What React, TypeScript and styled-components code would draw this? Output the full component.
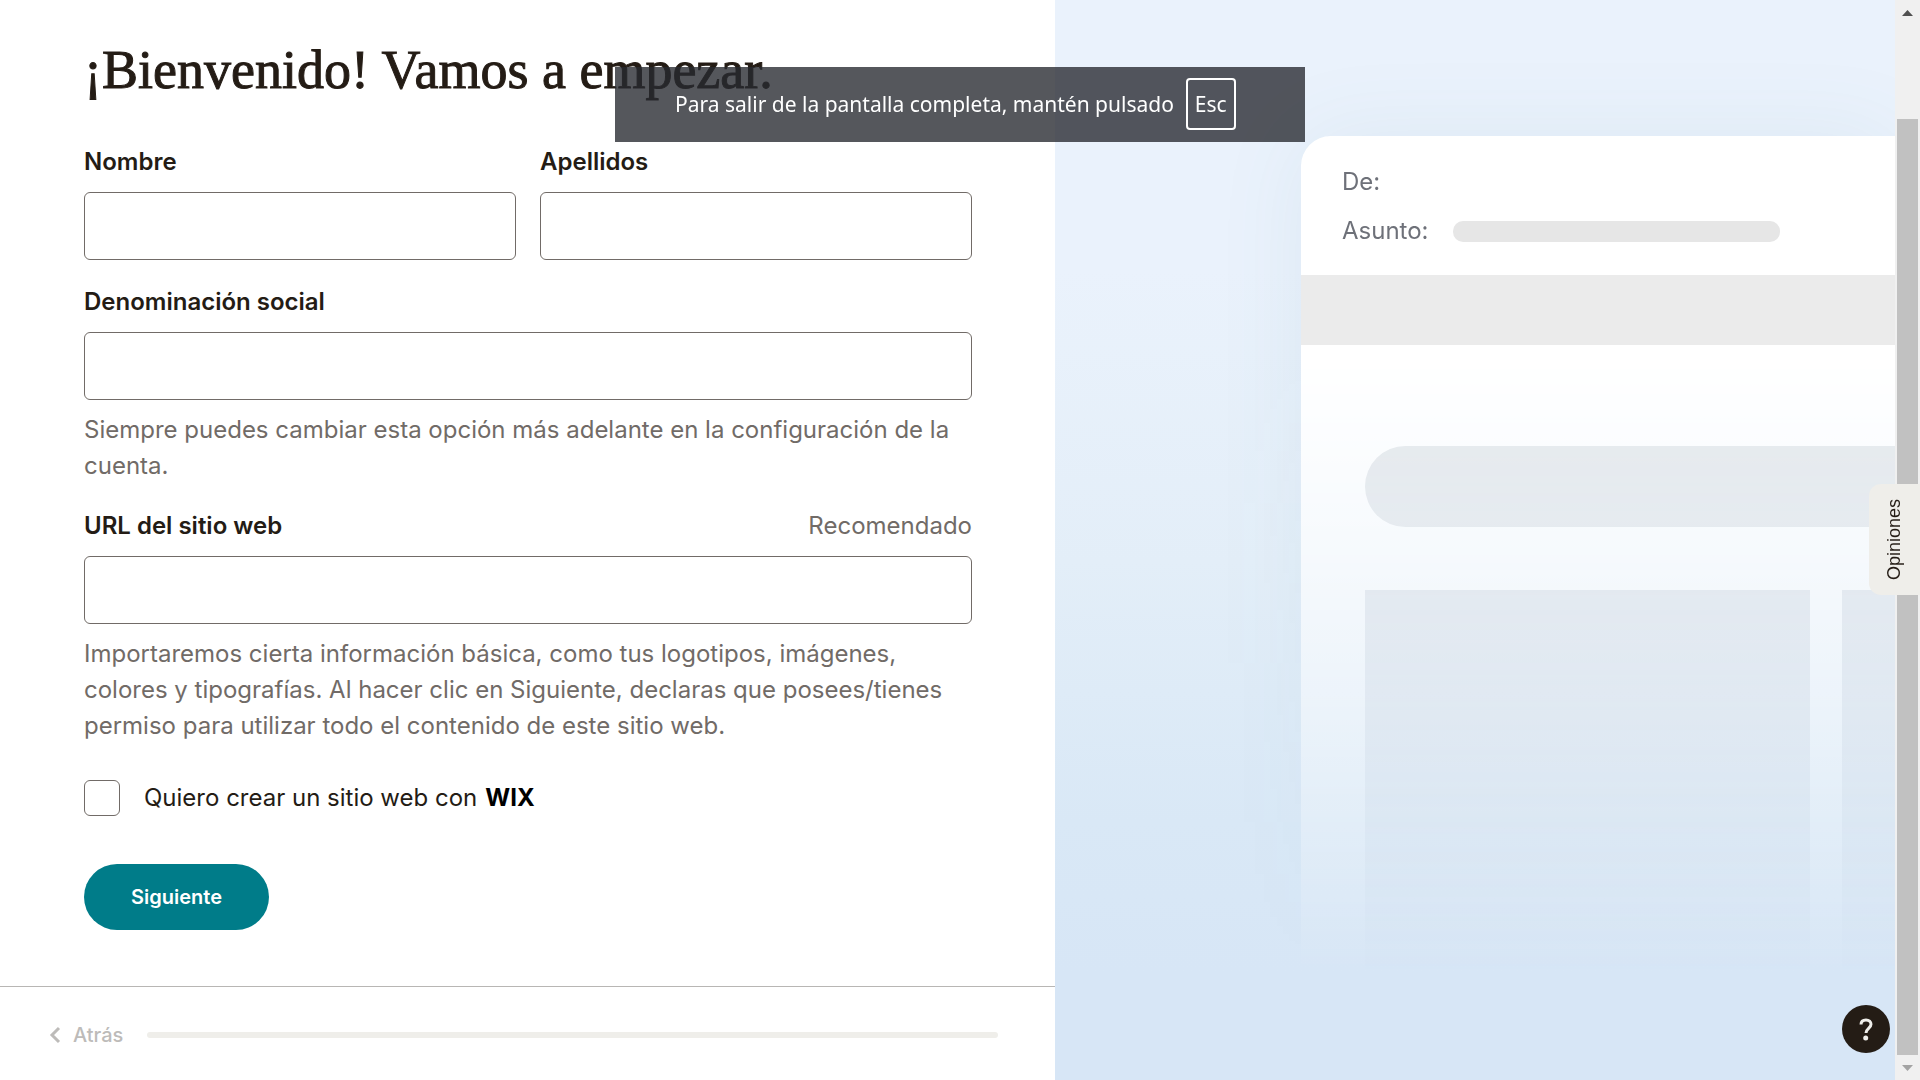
import React, { useState } from "react";
import styled, { createGlobalStyle } from "styled-components";

const GlobalStyle = createGlobalStyle`
  *, *::before, *::after { box-sizing: border-box; }
  body {
    margin: 0;
    background: #fff;
    color: #241c15;
    font-family: Inter, "Liberation Sans", sans-serif;
    font-size: 24px;
    line-height: 36px;
  }
  h1, p { margin: 0; }
  button, input { font: inherit; color: inherit; }
`;

const Page = styled.div`
  display: grid;
  grid-template-columns: minmax(0, 1055fr) minmax(0, 840fr) 25px;
  min-height: 100vh;
`;

const FormColumn = styled.main`
  display: flex;
  flex-direction: column;
`;

const Form = styled.form`
  flex: 1;
  display: flex;
  flex-direction: column;
  align-items: stretch;
  gap: 24px;
  padding: 40px 83px 56px 84px;
`;

const Title = styled.h1`
  margin-bottom: 20px;
  font-family: "Liberation Serif", "Times New Roman", serif;
  font-size: 54px;
  line-height: 60px;
  font-weight: 400;
  -webkit-text-stroke: 1px #241c15;
`;

const FieldRow = styled.div`
  display: grid;
  grid-template-columns: 1fr 1fr;
  gap: 24px;
`;

const Field = styled.div`
  display: flex;
  flex-direction: column;
  gap: 12px;
`;

const LabelRow = styled.div`
  display: flex;
  justify-content: space-between;
`;

const Label = styled.label`
  font-weight: 600;
`;

const Muted = styled.p`
  color: #716b67;
`;

const TextInput = styled.input`
  width: 100%;
  height: 68px;
  padding: 0 20px;
  border: 1px solid #716b67;
  border-radius: 6px;
  background: #fff;
`;

const CheckRow = styled.div`
  display: flex;
  align-items: center;
  gap: 24px;
  margin-top: 12px;
`;

const Checkbox = styled.input`
  appearance: none;
  width: 36px;
  height: 36px;
  margin: 0;
  border: 1px solid #716b67;
  border-radius: 6px;
  background: #fff;
  &:checked { background: #007c89; }
`;

const CheckLabel = styled.label`
  display: flex;
  gap: 8px;
`;

const Brand = styled.strong`
  color: #000;
  font-weight: 700;
`;

const SubmitButton = styled.button`
  align-self: flex-start;
  height: 66px;
  margin-top: 24px;
  padding: 0 47px;
  border: 0;
  border-radius: 33px;
  background: #007c89;
  color: #fff;
  font-size: 20px;
  font-weight: 600;
`;

const Footer = styled.footer`
  display: flex;
  align-items: center;
  gap: 24px;
  padding: 30px 57px 27px 48px;
  border-top: 1px solid #b8b6b4;
`;

const BackButton = styled.button`
  display: flex;
  align-items: center;
  gap: 11px;
  padding: 0;
  border: 0;
  background: none;
  color: #bdbbb9;
  font-size: 20px;
  line-height: 36px;
  font-weight: 500;
`;

const Progress = styled.div`
  flex: 1;
  height: 6px;
  border-radius: 3px;
  background: #efeeea;
`;

const PreviewColumn = styled.aside`
  display: flex;
  overflow: hidden;
  background: linear-gradient(#eaf2fc 25%, #e3eef8 52%, #d9e8f6 76%, #d7e6f6 90%);
`;

const PreviewFade = styled.div`
  flex: 1;
  display: flex;
  padding: 136px 0 0 246px;
  mask-image: linear-gradient(#000 345px, transparent 980px);
`;

const MailCard = styled.div`
  flex: 1;
  display: flex;
  flex-direction: column;
  border-radius: 30px 0 0 0;
  background: #fff;
  box-shadow: 0 0 90px rgba(80, 130, 140, 0.08);
`;

const MailHeader = styled.div`
  display: flex;
  flex-direction: column;
  gap: 13px;
  padding: 28px 41px 26px;
  color: #6e7179;
`;

const MailLine = styled.div`
  display: flex;
  align-items: center;
  gap: 24px;
`;

const SubjectBar = styled.div`
  width: 327px;
  height: 21px;
  border-radius: 10px;
  background: #e6e6e6;
`;

const Band = styled.div`
  height: 70px;
  background: #ebebeb;
`;

const MailBody = styled.div`
  flex: 1;
  display: flex;
  flex-direction: column;
  gap: 63px;
  padding: 101px 0 0 64px;
`;

const Pill = styled.div`
  height: 81px;
  border-radius: 41px 0 0 41px;
  background: #e6e9ec;
`;

const Blocks = styled.div`
  flex: 1;
  display: grid;
  grid-template-columns: 445px 1fr;
  gap: 32px;
`;

const Block = styled.div`
  background: #e4e7ec;
`;

const ScrollTrack = styled.div`
  display: flex;
  flex-direction: column;
  align-items: center;
  gap: 19px;
  padding: 10px 2px 9px;
  background: #f0f0f0;
`;

const ScrollThumb = styled.div`
  flex: 1;
  align-self: stretch;
  margin: 84px 0 -9px;
  background: #c1c1c1;
`;

const Arrow = styled.svg`
  display: block;
  width: 11px;
  height: 6px;
  flex: none;
`;

const Notice = styled.div`
  position: fixed;
  top: 67px;
  left: 50%;
  width: 690px;
  height: 75px;
  margin-left: -345px;
  padding: 0 60px 2px;
  display: flex;
  align-items: center;
  gap: 12px;
  background: rgba(39, 42, 48, 0.79);
  color: #fff;
  font-family: "Noto Sans", "Open Sans", sans-serif;
  font-size: 21px;
  white-space: nowrap;
`;

const Key = styled.kbd`
  padding: 6px 7px;
  border: 2px solid #fff;
  border-radius: 4px;
  font: inherit;
`;

const FeedbackTab = styled.button`
  position: fixed;
  right: 0;
  top: 484px;
  width: 51px;
  height: 111px;
  padding: 0;
  border: 0;
  border-radius: 0 12px 12px 0;
  background: #efeeea;
  color: #241c15;
  font-family: "Liberation Sans", Arial, sans-serif;
  font-size: 18px;
  writing-mode: vertical-rl;
  transform: rotate(180deg);
`;

const HelpButton = styled.button`
  position: fixed;
  right: 30px;
  bottom: 27px;
  width: 48px;
  height: 48px;
  padding: 0;
  border: 0;
  border-radius: 50%;
  background: #241c15;
  svg { display: block; margin: auto; }
`;

export default function App() {
  const [wix, setWix] = useState(false);
  return (
    <>
      <GlobalStyle />
      <Page>
        <FormColumn>
          <Form onSubmit={(e) => e.preventDefault()}>
            <Title>¡Bienvenido! Vamos a empezar.</Title>
            <FieldRow>
              <Field>
                <Label htmlFor="first">Nombre</Label>
                <TextInput id="first" type="text" />
              </Field>
              <Field>
                <Label htmlFor="last">Apellidos</Label>
                <TextInput id="last" type="text" />
              </Field>
            </FieldRow>
            <Field>
              <Label htmlFor="company">Denominación social</Label>
              <TextInput id="company" type="text" />
              <Muted>
                Siempre puedes cambiar esta opción más adelante en la configuración de la cuenta.
              </Muted>
            </Field>
            <Field>
              <LabelRow>
                <Label htmlFor="url">URL del sitio web</Label>
                <Muted>Recomendado</Muted>
              </LabelRow>
              <TextInput id="url" type="url" />
              <Muted>
                Importaremos cierta información básica, como tus logotipos, imágenes, colores y
                tipografías. Al hacer clic en Siguiente, declaras que posees/tienes permiso para
                utilizar todo el contenido de este sitio web.
              </Muted>
            </Field>
            <CheckRow>
              <Checkbox
                id="wix"
                type="checkbox"
                checked={wix}
                onChange={(e) => setWix(e.target.checked)}
              />
              <CheckLabel htmlFor="wix">
                Quiero crear un sitio web con <Brand>WIX</Brand>
              </CheckLabel>
            </CheckRow>
            <SubmitButton type="submit">Siguiente</SubmitButton>
          </Form>
          <Footer>
            <BackButton type="button">
              <svg width="14" height="18" viewBox="0 0 14 18" fill="none" aria-hidden="true">
                <path d="M11 2L4 9l7 7" stroke="currentColor" strokeWidth="3" />
              </svg>
              Atrás
            </BackButton>
            <Progress />
          </Footer>
        </FormColumn>

        <PreviewColumn>
          <PreviewFade>
            <MailCard>
              <MailHeader>
                <MailLine>De:</MailLine>
                <MailLine>
                  Asunto:
                  <SubjectBar />
                </MailLine>
              </MailHeader>
              <Band />
              <MailBody>
                <Pill />
                <Blocks>
                  <Block />
                  <Block />
                </Blocks>
              </MailBody>
            </MailCard>
          </PreviewFade>
        </PreviewColumn>

        <ScrollTrack aria-hidden="true">
          <Arrow viewBox="0 0 11 6">
            <path d="M0 6L5.500 0L11 6z" fill="#505050" />
          </Arrow>
          <ScrollThumb />
          <Arrow viewBox="0 0 11 6">
            <path d="M0 0L5.500 6L11 0z" fill="#a3a3a3" />
          </Arrow>
        </ScrollTrack>
      </Page>

      <Notice role="status">
        Para salir de la pantalla completa, mantén pulsado <Key>Esc</Key>
      </Notice>
      <FeedbackTab type="button">Opiniones</FeedbackTab>
      <HelpButton type="button" aria-label="Ayuda">
        <svg width="16" height="24" viewBox="0 0 16 24" fill="none" aria-hidden="true">
          <path
            d="M3 7.500C3 4.500 5 3 8 3s5 1.700 5 4.300c0 4-5 4.200-5 8.700"
            stroke="#efeeea"
            strokeWidth="3"
          />
          <circle cx="7.700" cy="21" r="2.500" fill="#efeeea" />
        </svg>
      </HelpButton>
    </>
  );
}
